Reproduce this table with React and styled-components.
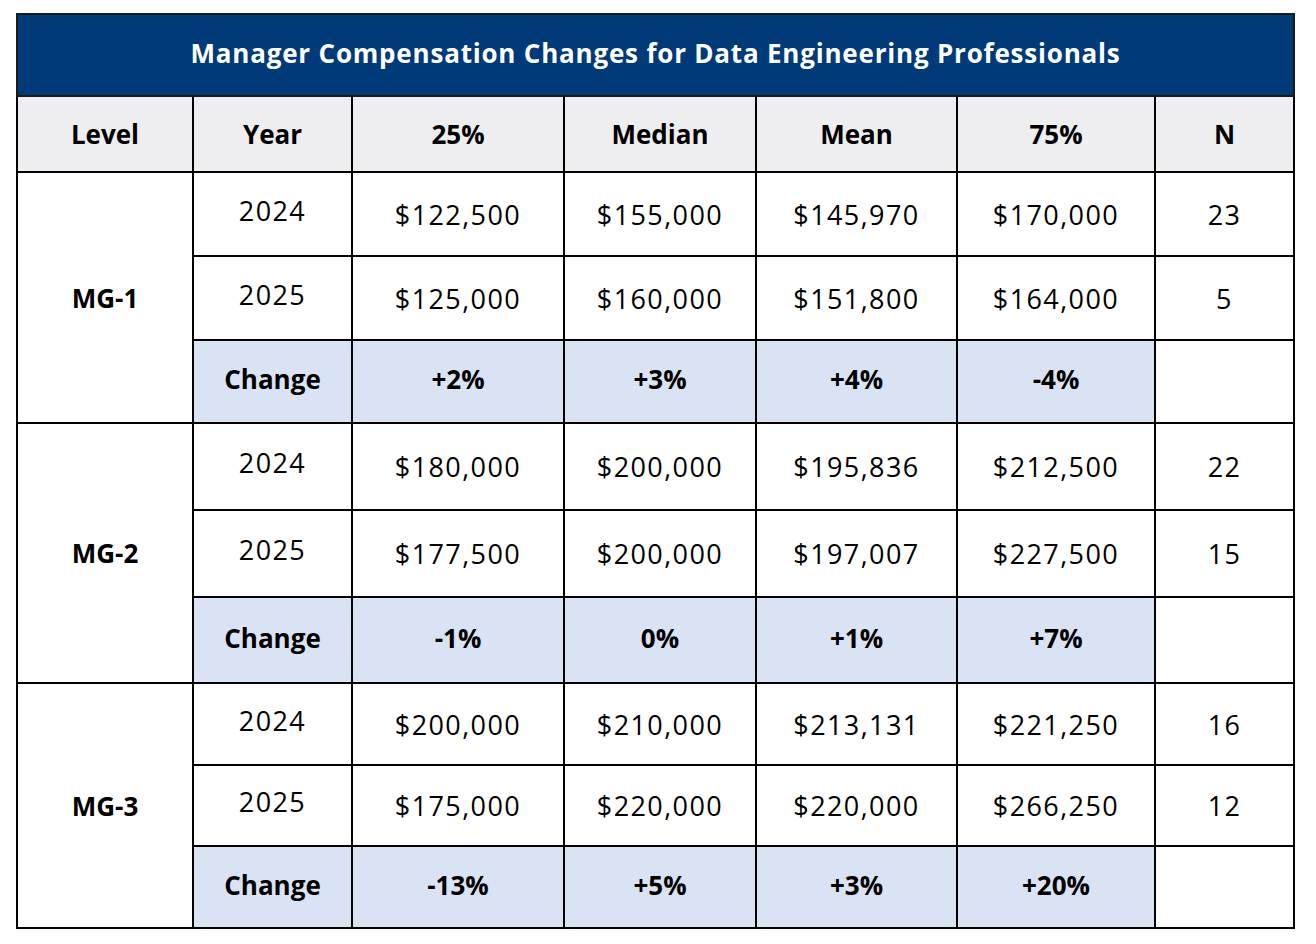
import React from 'react';
import styled, { createGlobalStyle } from 'styled-components';

const GlobalStyle = createGlobalStyle`
  html, body {
    margin: 0;
    padding: 0;
    background: #ffffff;
  }
  body {
    font-family: 'Open Sans', Lato, sans-serif;
    color: #000000;
  }
`;

const columns = [176, 159, 212, 192, 201, 198, 139];
const headers = ['Level', 'Year', '25%', 'Median', 'Mean', '75%', 'N'];

const levels = [
  {
    name: 'MG-1',
    heights: [84, 84, 83],
    rows: [
      { year: '2024', values: ['$122,500', '$155,000', '$145,970', '$170,000'], n: '23' },
      { year: '2025', values: ['$125,000', '$160,000', '$151,800', '$164,000'], n: '5' },
    ],
    change: ['+2%', '+3%', '+4%', '-4%'],
  },
  {
    name: 'MG-2',
    heights: [87, 87, 86],
    rows: [
      { year: '2024', values: ['$180,000', '$200,000', '$195,836', '$212,500'], n: '22' },
      { year: '2025', values: ['$177,500', '$200,000', '$197,007', '$227,500'], n: '15' },
    ],
    change: ['-1%', '0%', '+1%', '+7%'],
  },
  {
    name: 'MG-3',
    heights: [82, 81, 82],
    rows: [
      { year: '2024', values: ['$200,000', '$210,000', '$213,131', '$221,250'], n: '16' },
      { year: '2025', values: ['$175,000', '$220,000', '$220,000', '$266,250'], n: '12' },
    ],
    change: ['-13%', '+5%', '+3%', '+20%'],
  },
];

const Page = styled.div`
  padding: 13px 0 0 16px;
`;

const Table = styled.table`
  border-collapse: collapse;
  table-layout: fixed;
  width: 1278px;
`;

const TitleCell = styled.th`
  height: 76px;
  padding: 0 0 4px;
  background: #003a78;
  color: #ffffff;
  font-size: 26px;
  font-weight: 700;
  letter-spacing: 0.8px;
  text-align: center;
  border: 2px solid #1a1a1a;
`;

const HeadCell = styled.th`
  height: 74px;
  padding: 0;
  background: #eeedf0;
  font-size: 26px;
  font-weight: 700;
  text-align: center;
  border: 2px solid #000000;
`;

const Cell = styled.td`
  padding: 0 0 ${({ $raise }) => ($raise ? '8px' : '0')};
  font-size: ${({ $bold }) => ($bold ? '26px' : '27px')};
  font-weight: ${({ $bold }) => ($bold ? 700 : 400)};
  letter-spacing: ${({ $bold }) => ($bold ? '0' : '1.4px')};
  text-align: center;
  border: 2px solid #000000;
  background: #ffffff;
`;

const ChangeCell = styled(Cell)`
  padding-bottom: 5px;
  background: #dae3f3;
`;

const Row = styled.tr`
  height: ${({ $h }) => $h}px;
`;

export default function App() {
  return (
    <Page>
      <GlobalStyle />
      <Table>
        <colgroup>
          {columns.map((w, i) => (
            <col key={i} style={{ width: w }} />
          ))}
        </colgroup>
        <thead>
          <tr>
            <TitleCell colSpan={7}>
              Manager Compensation Changes for Data Engineering Professionals
            </TitleCell>
          </tr>
          <tr>
            {headers.map((h) => (
              <HeadCell key={h}>{h}</HeadCell>
            ))}
          </tr>
        </thead>
        <tbody>
          {levels.map((lv) => (
            <React.Fragment key={lv.name}>
              {lv.rows.map((r, i) => (
                <Row key={r.year} $h={lv.heights[i]}>
                  {i === 0 && (
                    <Cell rowSpan={3} $bold>
                      {lv.name}
                    </Cell>
                  )}
                  <Cell $raise>{r.year}</Cell>
                  {r.values.map((v, j) => (
                    <Cell key={j}>{v}</Cell>
                  ))}
                  <Cell>{r.n}</Cell>
                </Row>
              ))}
              <Row $h={lv.heights[2]}>
                <ChangeCell $bold>Change</ChangeCell>
                {lv.change.map((c, j) => (
                  <ChangeCell key={j} $bold>
                    {c}
                  </ChangeCell>
                ))}
                <Cell />
              </Row>
            </React.Fragment>
          ))}
        </tbody>
      </Table>
    </Page>
  );
}
